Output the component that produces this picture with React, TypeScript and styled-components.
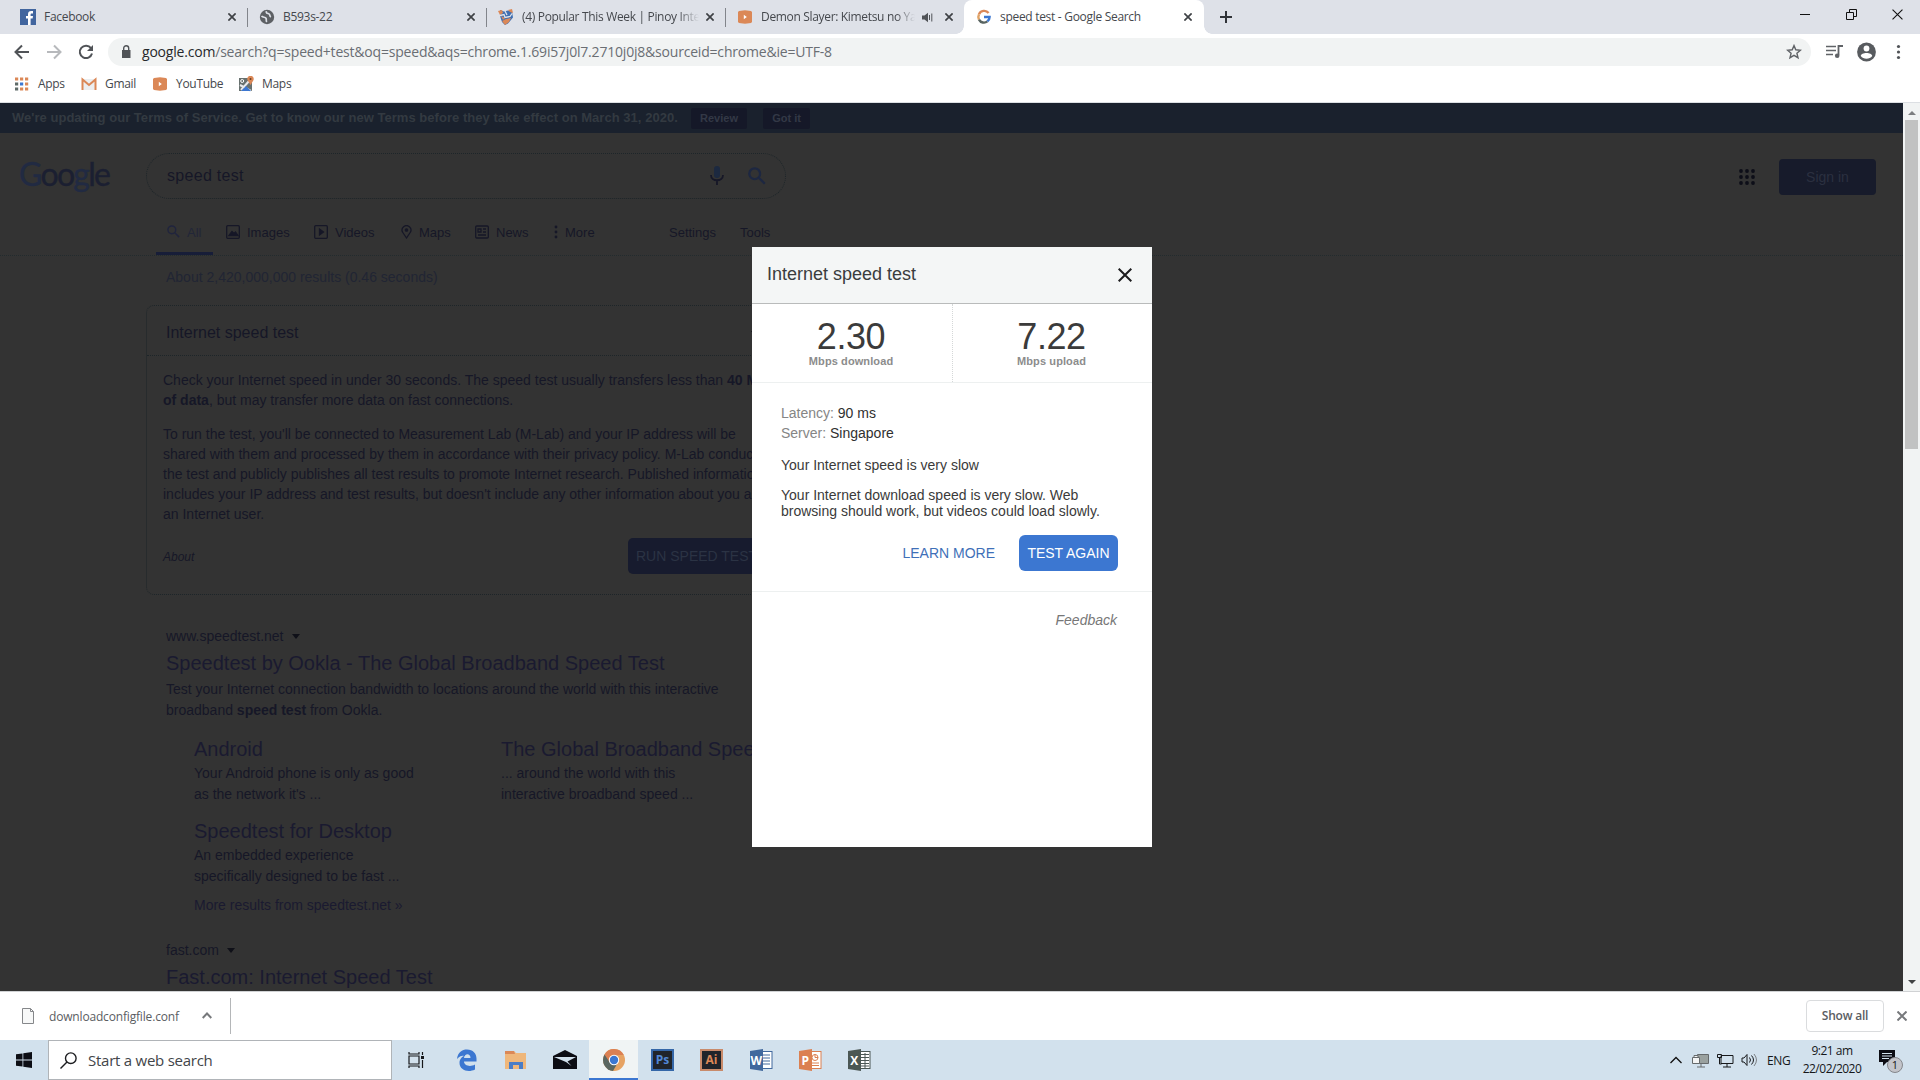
import React from 'react';
import styled, { createGlobalStyle, css } from 'styled-components';

const GlobalStyle = createGlobalStyle`
  * {
    box-sizing: border-box;
  }

  body {
    margin: 0;
    background: #ffffff;
    overflow: hidden;
  }

  svg {
    display: block;
    flex: none;
  }
`;

const uiFont = css`
  font-family: 'Open Sans', 'Noto Sans', sans-serif;
`;

const INK = '#161727';
const LINK = '#1a1a30';
const DIM_LINE = '#1d2529';

const Window = styled.div`
  width: 1920px;
  height: 1080px;
  display: flex;
  flex-direction: column;
  overflow: hidden;
  white-space: nowrap;
  ${uiFont}
`;

/* ---------- browser chrome ---------- */

const TabStrip = styled.div`
  display: flex;
  height: 34px;
  flex: none;
  padding-left: 8px;
  background: #dee1e8;
`;

const Tab = styled.div<{ $active?: boolean; $divider?: boolean }>`
  position: relative;
  display: flex;
  align-items: center;
  width: ${props => (props.$active ? 240 : 239)}px;
  height: 34px;
  padding: 0 ${props => (props.$active ? 12 : 11)}px 0 12px;
  border-radius: 8px 8px 0 0;
  background: ${props => (props.$active ? '#ffffff' : 'transparent')};
  font-size: 12px;
  color: #45484d;

  ${props => props.$divider && css`
    &::after {
      content: '';
      position: absolute;
      right: -1px;
      top: 8px;
      width: 1px;
      height: 19px;
      background: #82858b;
    }
  `}

  ${props => props.$active && css`
    &::before {
      content: '';
      position: absolute;
      left: -8px;
      right: -8px;
      bottom: 0;
      height: 8px;
      background:
        radial-gradient(circle at 0 0, transparent 7.5px, #fff 8px) left / 8px 8px no-repeat,
        radial-gradient(circle at 100% 0, transparent 7.5px, #fff 8px) right / 8px 8px no-repeat;
    }
  `}
`;

const TabTitle = styled.span<{ $fade?: boolean }>`
  flex: 1;
  min-width: 0;
  margin: 0 9px 0 8px;
  padding-bottom: 1px;
  overflow: hidden;
  letter-spacing: -0.3px;
  ${props => props.$fade && css`
    margin-right: 7px;
    letter-spacing: -0.33px;
    mask-image: linear-gradient(to right, #000 88%, transparent);
  `}
`;

const NewTab = styled.div`
  display: flex;
  align-items: center;
  margin-left: 16px;
`;

const WindowButtons = styled.div`
  display: flex;
  margin-left: auto;
  height: 28px;
`;

const WindowButton = styled.div`
  width: 46px;
  display: flex;
  align-items: center;
  justify-content: center;
`;

const Toolbar = styled.div`
  display: flex;
  align-items: center;
  height: 36px;
  flex: none;
  padding: 0 13px 0 14px;
  background: #ffffff;
`;

const NavButtons = styled.div`
  display: flex;
  gap: 16px;
  width: 94px;
`;

const AddressBar = styled.div`
  display: flex;
  align-items: center;
  width: 1703px;
  height: 28px;
  padding: 0 9px 0 12px;
  border-radius: 14px;
  background: #f1f3f3;
  font-size: 14px;
  color: #6a6e73;
`;

const Url = styled.span`
  flex: 1;
  margin-left: 10px;
  padding-bottom: 1px;
  letter-spacing: -0.2px;

  b {
    font-weight: 400;
    color: #26282b;
  }
`;

const ToolbarActions = styled.div`
  display: flex;
  align-items: center;
  justify-content: space-between;
  flex: 1;
  padding-left: 15px;
`;

const BookmarkBar = styled.div`
  display: flex;
  height: 33px;
  flex: none;
  padding: 0 0 4px 14px;
  border-bottom: 1px solid #dcdfe3;
  background: #ffffff;
`;

const Bookmark = styled.div<{ $width: number }>`
  display: flex;
  align-items: center;
  gap: 8px;
  width: ${props => props.$width}px;
  padding-bottom: 1px;
  font-size: 12px;
  letter-spacing: -0.3px;
  color: #45484d;
`;

/* ---------- page behind the dialog ---------- */

const Viewport = styled.div`
  position: relative;
  display: flex;
  height: 888px;
  flex: none;
  overflow: hidden;
`;

const Page = styled.div`
  width: 1903px;
  overflow: hidden;
  background: #333333;
  color: ${INK};
  font-family: 'Liberation Sans', Arial, sans-serif;
  font-size: 14px;
`;

const TermsBanner = styled.div`
  display: flex;
  align-items: center;
  height: 30px;
  padding-left: 12px;
  background: #1a212d;
  color: #333a41;
  font-weight: 700;
  font-size: 13px;
`;

const TermsText = styled.span`
  width: 679px;
  padding-bottom: 1px;
  letter-spacing: 0.03px;
`;

const TermsButton = styled.div<{ $width: number }>`
  width: ${props => props.$width}px;
  height: 21px;
  margin-right: 16px;
  border-radius: 2px;
  background: #151828;
  color: #333846;
  font-size: 11px;
  line-height: 21px;
  text-align: center;
`;

const SearchHeader = styled.div`
  display: flex;
  height: 85px;
  padding: 20px 27px 0 19px;
`;

const Logo = styled.div`
  width: 127px;
  font-family: Lato, sans-serif;
  font-size: 32px;
  line-height: 42px;
  letter-spacing: -1.7px;
  color: #212a42;
  -webkit-text-stroke: 0.4px currentColor;

  span {
    color: #1b1f31;
  }
`;

const SearchBox = styled.div`
  display: flex;
  align-items: center;
  width: 640px;
  height: 46px;
  padding: 0 19px 0 20px;
  border: 1px dotted ${DIM_LINE};
  border-radius: 23px;
  font-size: 16px;

  span {
    flex: 1;
    letter-spacing: 0.3px;
  }
`;

const HeaderActions = styled.div`
  display: flex;
  align-items: center;
  gap: 24px;
  height: 36px;
  margin: 6px 0 0 auto;
`;

const SignIn = styled.div`
  width: 97px;
  height: 36px;
  border-radius: 4px;
  background: #171b2b;
  color: #2b3040;
  font-size: 14px;
  line-height: 37px;
  text-align: center;
`;

const SearchTabs = styled.div`
  display: flex;
  height: 38px;
  padding-left: 156px;
  border-bottom: 1px dotted #222b2e;
`;

const SearchTab = styled.div<{ $width: number; $active?: boolean }>`
  display: flex;
  gap: 7px;
  width: ${props => props.$width}px;
  height: 37px;
  padding: 7px 0 0 ${props => (props.$active ? 11 : 0)}px;
  border-bottom: 3px solid ${props => (props.$active ? '#171d38' : 'transparent')};
  color: ${props => (props.$active ? '#222638' : INK)};
  font-size: 13px;
  line-height: 15px;
`;

const TabGap = styled.div<{ $width: number }>`
  width: ${props => props.$width}px;
`;

const ResultStats = styled.div`
  height: 49px;
  padding: 12px 0 0 166px;
  line-height: 18px;
  color: #212533;
`;

const Card = styled.div`
  width: 640px;
  height: 290px;
  margin-left: 146px;
  border: 1px dotted ${DIM_LINE};
  border-radius: 8px;
`;

const CardHeader = styled.div`
  display: flex;
  align-items: center;
  justify-content: space-between;
  height: 50px;
  padding: 5px 26px 0 19px;
  border-bottom: 1px dotted ${DIM_LINE};
  font-size: 16px;
`;

const CardBody = styled.div`
  padding: 14px 20px 0 16px;
  line-height: 20px;

  p {
    margin: 0 0 14px;
  }
`;

const CardFooter = styled.div`
  display: flex;
  justify-content: space-between;
  align-items: center;
  height: 36px;

  em {
    padding-top: 1px;
    font-size: 12px;
  }
`;

const RunButton = styled.div`
  width: 137px;
  height: 36px;
  border-radius: 5px;
  padding-left: 8px;
  background: #171b2e;
  color: #2b3344;
  line-height: 36px;
`;

const Results = styled.div`
  padding: 31px 0 0 166px;
`;

const Cite = styled.div`
  display: flex;
  align-items: center;
  gap: 8px;
  height: 20px;
`;

const Triangle = styled.i`
  border: 4px solid transparent;
  border-top: 5px solid #0f1018;
  border-bottom: 0;
`;

const ResultTitle = styled.div`
  height: 33px;
  font-size: 20px;
  line-height: 34px;
  color: ${LINK};
`;

const Snippet = styled.div`
  line-height: 20.6px;
`;

const SiteLinks = styled.div`
  display: grid;
  grid-template-columns: 307px 300px;
  grid-template-rows: 82px 77px;
  padding: 16px 0 0 28px;
`;

const SiteLinkTitle = styled.div`
  font-size: 20px;
  line-height: 27px;
  color: ${LINK};
`;

const MoreResults = styled.div`
  height: 45px;
  padding-left: 28px;
  line-height: 20px;
  color: ${LINK};
`;

const Scrollbar = styled.div`
  display: flex;
  flex-direction: column;
  align-items: center;
  justify-content: space-between;
  width: 17px;
  padding: 7px 0 6px;
  background: #f1f3f3;
`;

const Thumb = styled.div`
  width: 13px;
  height: 329px;
  margin: 5px 0 auto;
  background: #c1c2c2;
`;

/* ---------- speed test dialog ---------- */

const Dialog = styled.div`
  position: absolute;
  left: 752px;
  top: 144px;
  width: 400px;
  height: 600px;
  background: #ffffff;
  color: #3a3a3a;
  font-family: 'Liberation Sans', Arial, sans-serif;
  font-size: 14px;
`;

const DialogHeader = styled.div`
  display: flex;
  align-items: center;
  justify-content: space-between;
  height: 57px;
  padding: 0 20px 1px 15px;
  border-bottom: 1px solid #b9bbbb;
  background: #f4f6f6;
  font-size: 18px;
  color: #3a3c3e;
`;

const Metrics = styled.div`
  display: grid;
  grid-template-columns: 200px 200px;
  height: 79px;
  border-bottom: 1px solid #edf0f0;
`;

const Metric = styled.div`
  padding: 12px 2px 0 0;
  text-align: center;

  & + & {
    border-left: 1px dotted #d5d8d8;
  }
`;

const MetricValue = styled.div`
  font-size: 36px;
  line-height: 42px;
  letter-spacing: -0.4px;
  color: #3b3b3b;
`;

const MetricUnit = styled.div`
  margin-top: -4px;
  font-size: 11px;
  font-weight: 700;
  line-height: 14px;
  letter-spacing: 0.1px;
  color: #8c8c8c;
`;

const DialogBody = styled.div`
  height: 209px;
  padding: 20px 34px 0 29px;
  border-bottom: 1px solid #edf0f0;
  line-height: 20px;

  p {
    margin: 12px 0 0;
  }
`;

const Detail = styled.div`
  color: #303030;

  span {
    color: #858585;
  }
`;

const Advice = styled.p`
  line-height: 16px;
`;

const DialogActions = styled.div`
  display: flex;
  justify-content: flex-end;
  align-items: center;
  gap: 24px;
  margin-top: 16px;
  color: #3f70b8;
`;

const TestAgain = styled.div`
  width: 99px;
  height: 36px;
  border-radius: 6px;
  background: #3c77d1;
  color: #ffffff;
  line-height: 36px;
  text-align: center;
`;

const Feedback = styled.div`
  padding: 18px 35px 0 0;
  font-style: italic;
  line-height: 20px;
  text-align: right;
  color: #777777;
`;

/* ---------- download shelf ---------- */

const Shelf = styled.div`
  display: flex;
  align-items: center;
  height: 49px;
  flex: none;
  padding: 0 13px 1px 22px;
  border-top: 1px solid #d0d2d4;
  background: #ffffff;
  font-size: 12px;
  color: #5a5d62;
`;

const Download = styled.div`
  display: flex;
  align-items: center;
  width: 209px;
  height: 36px;
  border-right: 1px solid #b4b6b8;
  letter-spacing: -0.17px;

  span {
    width: 153px;
    padding: 2px 0 0 15px;
  }
`;

const ShowAll = styled.div`
  width: 78px;
  height: 32px;
  margin: 0 13px 0 auto;
  border: 1px solid #dadcde;
  border-radius: 4px;
  font-weight: 600;
  letter-spacing: -0.2px;
  line-height: 30px;
  text-align: center;
`;

/* ---------- taskbar ---------- */

const Taskbar = styled.div`
  display: flex;
  align-items: center;
  height: 40px;
  flex: none;
  background: #d2e1ed;
  color: #15171a;
`;

const StartButton = styled.div`
  display: flex;
  justify-content: center;
  width: 48px;
`;

const TaskSearch = styled.div`
  display: flex;
  align-items: center;
  gap: 11px;
  width: 344px;
  height: 40px;
  padding-left: 11px;
  border: 1px solid #b0b4b8;
  background: #ffffff;
  font-size: 15px;
  letter-spacing: -0.25px;
  color: #424549;
`;

const TaskItem = styled.div<{ $active?: boolean }>`
  display: flex;
  align-items: center;
  justify-content: center;
  width: 49px;
  height: 40px;
  background: ${props => (props.$active ? '#f0f4f4' : 'transparent')};
  border-bottom: 2px solid ${props => (props.$active ? '#3c77d1' : 'transparent')};
  border-top: 2px solid transparent;

  &:nth-child(3) {
    width: 50px;
    padding-right: 2px;
  }
`;

const AdobeIcon = styled.div<{ $color: string; $ink: string }>`
  width: 23px;
  height: 22px;
  border: 2px solid ${props => props.$color};
  background: #20242a;
  color: ${props => props.$ink};
  font-size: 12px;
  font-weight: 700;
  line-height: 17px;
  text-align: center;
`;

const Tray = styled.div`
  display: flex;
  align-items: center;
  margin-left: auto;
  padding-right: 17px;
`;

const Language = styled.span`
  width: 35px;
  margin-left: 9px;
  font-size: 12px;
  letter-spacing: -0.3px;
`;

const Clock = styled.div`
  width: 60px;
  font-size: 12px;
  letter-spacing: -0.5px;
  line-height: 18px;
  text-align: center;
`;

const TrayIcon = styled.div<{ $left: number }>`
  margin-left: ${props => props.$left}px;
`;

const NoticeIcon = styled.div`
  position: relative;
  width: 24px;
  height: 26px;
  margin: 6px 0 0 17px;
`;

const NoticeCount = styled.span`
  position: absolute;
  left: 8px;
  top: 7px;
  width: 16px;
  height: 16px;
  border: 1px solid #85878c;
  border-radius: 50%;
  background: #c3c4ca;
  font-size: 11px;
  line-height: 14px;
  text-align: center;
`;

const Cross: React.FC<{ size?: number; color?: string; weight?: number }> = ({
  size = 8,
  color = '#3e4145',
  weight = 1.7,
}) => (
  <svg width={size} height={size} viewBox="0 0 10 10" stroke={color} strokeWidth={(weight * 10) / size}>
    <path d="M.5.5l9 9M9.5.5l-9 9" />
  </svg>
);

const VideoIcon = () => (
  <svg width="16" height="16" viewBox="0 0 16 16">
    <path d="M2 2l6-.7L14 2l1 1v10l-1 1-6 .7L2 14l-1-1V3z" fill="#db8857" />
    <path d="M6.8 5.8v4.4L9.8 8z" fill="#fff" />
  </svg>
);

const Magnifier: React.FC<{ size: number; color: string; weight?: number }> = ({ size, color, weight = 2 }) => (
  <svg width={size} height={size} viewBox="0 0 18 18" fill="none" stroke={color} strokeWidth={weight}>
    <circle cx="6.7" cy="6.7" r="5.4" />
    <path d="M10.8 10.8l6 6" />
  </svg>
);

const OfficeIcon: React.FC<{ color: string; letter: string; kind: 'doc' | 'slide' | 'sheet' }> = ({
  color,
  letter,
  kind,
}) => (
  <svg width="24" height="24" viewBox="0 0 24 24">
    <rect x="12" y="3.5" width="11" height="17" fill="#fff" stroke={color} />
    {kind === 'doc' && <path d="M14 7h7M14 10h7M14 13h7M14 16h7" stroke={color} />}
    {kind === 'slide' && (
      <g stroke={color} fill="none">
        <circle cx="17" cy="9.5" r="3" />
        <path d="M17 9.5V6M17 9.5h3M14 15h7M14 17.5h7" />
      </g>
    )}
    {kind === 'sheet' && <path d="M14 6.5h8M14 9.5h8M14 12.5h8M14 15.5h8M14 18h8M18 5v15" stroke={color} />}
    <path d="M1 3l13-2v22L1 21z" fill={color} />
    <text x="7.3" y="16.5" fill="#fff" fontFamily="Open Sans" fontWeight="700" fontSize="12" textAnchor="middle">
      {letter}
    </text>
  </svg>
);

const dotGrid = [1, 6, 11];

const BrowserTabs = () => (
  <TabStrip>
    <Tab $divider>
      <svg width="16" height="16" viewBox="0 0 16 16">
        <path d="M0 0h16v16H0z" fill="#41659e" />
        <path d="M8 16V9.5H6V7h2V5.2C8 3 9.3 2 11.2 2H13v2.4h-1.2c-.9 0-1.2.4-1.2 1.2V7H13l-.4 2.5h-2V16z" fill="#fff" />
      </svg>
      <TabTitle>Facebook</TabTitle>
      <Cross />
    </Tab>
    <Tab $divider>
      <svg width="16" height="16" viewBox="0 0 16 16">
        <circle cx="8" cy="8" r="7.2" fill="#5d6064" />
        <path
          d="M2.5 7c1.5 1.8 3.5.8 4.5 2.2.8 1.1-.4 2.3.8 3.8M7.5 2.2c-.8 1.8.8 2 2.2 2.5 1.8.7.3 2.3 2.2 3.3"
          fill="none"
          stroke="#dee1e8"
          strokeWidth="1.7"
        />
      </svg>
      <TabTitle>B593s-22</TabTitle>
      <Cross />
    </Tab>
    <Tab $divider>
      <svg width="16" height="16" viewBox="0 0 16 16">
        <path d="M2 1l4 1.500 4-1 4 1 1 6-5 6-3 1.500-3-3-2-6z" fill="#3f6fb2" />
        <path d="M0 2l4-1 1 3-3 2zM10 1l4-1 1 4-3-1zM3 7l4 2-2 2zM4 12l4-2 5-1-2 4-4 3z" fill="#db8857" />
        <path d="M2 6.500l4-1 1 3 5-1 2-3M7 2l2 4" fill="none" stroke="#dfe3ea" strokeWidth="1.3" />
      </svg>
      <TabTitle $fade>(4) Popular This Week | Pinoy Internet</TabTitle>
      <Cross />
    </Tab>
    <Tab>
      <VideoIcon />
      <TabTitle $fade>Demon Slayer: Kimetsu no Yaiba</TabTitle>
      <svg width="11" height="11" viewBox="0 0 11 11">
        <path d="M0 3.5h2.5L6 .8v9.4L2.5 7.5H0z" fill="#505357" />
        <path d="M7.5 3v5M9.8 1.5v8" stroke="#505357" />
      </svg>
      <TabGap $width={12} />
      <Cross />
    </Tab>
    <Tab $active>
      <svg width="16" height="16" viewBox="0 0 16 16" fill="none" strokeWidth="2.4">
        <path d="M12.6 4A5.6 5.6 0 0 0 3 5.4" stroke="#db8857" />
        <path d="M3 5.4a5.6 5.6 0 0 0 0 5.2" stroke="#e0a468" />
        <path d="M3 10.6A5.6 5.6 0 0 0 11.4 12.4" stroke="#586461" />
        <path d="M11.4 12.4C13 11 13.6 9.8 13.6 8H8" stroke="#3c77d1" />
      </svg>
      <TabTitle>speed test - Google Search</TabTitle>
      <Cross />
    </Tab>
    <NewTab>
      <svg width="12" height="12" viewBox="0 0 12 12" stroke="#303338" strokeWidth="2">
        <path d="M6 0v12M0 6h12" />
      </svg>
    </NewTab>
    <WindowButtons>
      <WindowButton>
        <svg width="10" height="10" stroke="#111">
          <path d="M0 5.5h10" />
        </svg>
      </WindowButton>
      <WindowButton>
        <svg width="11" height="11" fill="none" stroke="#111">
          <path d="M.5 3.5h7v7h-7zM3.5 3V.5h7v7H8" />
        </svg>
      </WindowButton>
      <WindowButton>
        <Cross size={11} color="#111" weight={1.1} />
      </WindowButton>
    </WindowButtons>
  </TabStrip>
);

const NavigationBar = () => (
  <Toolbar>
    <NavButtons>
      <svg width="16" height="16" viewBox="0 0 16 16" fill="none" stroke="#505357" strokeWidth="2">
        <path d="M15 8H2M8 1.5L1.5 8 8 14.5" />
      </svg>
      <svg width="16" height="16" viewBox="0 0 16 16" fill="none" stroke="#b7b9bc" strokeWidth="2">
        <path d="M1 8h13M8 1.5L14.5 8 8 14.5" />
      </svg>
      <svg width="16" height="16" viewBox="0 0 16 16">
        <path d="M13 4.2A6.2 6.2 0 1 0 14 9.5" fill="none" stroke="#505357" strokeWidth="2" />
        <path d="M15 1v6H9z" fill="#505357" />
      </svg>
    </NavButtons>
    <AddressBar>
      <svg width="12" height="14" viewBox="0 0 12 14">
        <path d="M2 5h8.5v8H2z" fill="#505357" />
        <path d="M3.7 5.5V3.2a2.5 2.5 0 0 1 5 0v2.3" fill="none" stroke="#505357" strokeWidth="1.4" />
      </svg>
      <Url>
        <b>google.com</b>/search?q=speed+test&amp;oq=speed&amp;aqs=chrome.1.69i57j0l7.2710j0j8&amp;sourceid=chrome&amp;ie=UTF-8
      </Url>
      <svg width="16" height="16" viewBox="0 0 16 16" fill="none" stroke="#606367" strokeWidth="1.4">
        <path d="M8 1.6l1.8 4.2 4.6.4-3.5 3 1.1 4.5L8 11.3l-4 2.4 1.1-4.5-3.5-3 4.6-.4z" />
      </svg>
    </AddressBar>
    <ToolbarActions>
      <svg width="17" height="14" viewBox="0 0 17 14">
        <path d="M0 1.5h10M0 5.5h10M0 9.5h7" stroke="#606367" strokeWidth="1.6" />
        <path d="M17 1h-4.5v9" fill="none" stroke="#606367" strokeWidth="1.8" />
        <circle cx="11.2" cy="10.8" r="2.3" fill="#606367" />
      </svg>
      <svg width="20" height="20" viewBox="0 0 20 20">
        <circle cx="9.500" cy="10" r="9.400" fill="#585b5f" />
        <circle cx="9.500" cy="6.500" r="2.900" fill="#fff" />
        <path d="M3.800 14c0-4 11.400-4 11.400 0-2.400 3.600-9 3.600-11.400 0z" fill="#fff" />
      </svg>
      <svg width="16" height="16" viewBox="0 0 16 16" fill="#505357">
        <circle cx="7.500" cy="2.500" r="1.600" />
        <circle cx="7.500" cy="8" r="1.600" />
        <circle cx="7.500" cy="13.500" r="1.600" />
      </svg>
    </ToolbarActions>
  </Toolbar>
);

const Bookmarks = () => (
  <BookmarkBar>
    <Bookmark $width={67}>
      <svg width="16" height="14" viewBox="0 0 16 14">
        {dotGrid.map((y, row) =>
          dotGrid.map((x, col) => (
            <rect
              key={`${x}-${y}`}
              x={x}
              y={y - 0.5}
              width="3.2"
              height="3"
              fill={row === 1 && col === 1 ? '#3c77d1' : col === 0 && row > 0 ? '#5f6b68' : '#db8857'}
            />
          ))
        )}
      </svg>
      Apps
    </Bookmark>
    <Bookmark $width={71}>
      <svg width="16" height="16" viewBox="0 0 16 16">
        <path d="M1 3h14v11H1z" fill="#eceef0" />
        <path d="M1.5 14V3.5L8 9l6.5-5.5V14" fill="none" stroke="#db8857" strokeWidth="2" />
      </svg>
      Gmail
    </Bookmark>
    <Bookmark $width={86}>
      <VideoIcon />
      YouTube
    </Bookmark>
    <Bookmark $width={80}>
      <svg width="16" height="16" viewBox="0 0 16 16">
        <path d="M1 2h13v13H1z" fill="#68716f" />
        <path d="M3 14L12 4M2 9l11 6" stroke="#e8eaec" strokeWidth="2" />
        <path d="M3 15l5-5 5 5z" fill="#3c77d1" />
        <path d="M12.5 9L9.7 4.5a3.2 3.2 0 1 1 5.6 0z" fill="#db8857" />
        <circle cx="12.5" cy="3" r="1" fill="#6b3c22" />
        <circle cx="4.2" cy="5" r="1.5" fill="none" stroke="#fff" />
      </svg>
      Maps
    </Bookmark>
  </BookmarkBar>
);

const SearchNavigation = () => (
  <SearchTabs>
    <SearchTab $width={57} $active>
      <Magnifier size={13} color="#20243d" />
      All
    </SearchTab>
    <TabGap $width={13} />
    <SearchTab $width={88}>
      <svg width="14" height="14" fill="none" stroke={INK} strokeWidth="1.3">
        <rect x=".7" y=".7" width="12.6" height="12.6" rx="1" />
        <path d="M3 10.5l3-4 2 2 1.5-1.5L12 10.5z" fill={INK} />
      </svg>
      Images
    </SearchTab>
    <SearchTab $width={87}>
      <svg width="14" height="14" fill="none" stroke={INK} strokeWidth="1.3">
        <rect x=".7" y=".7" width="12.6" height="12.6" rx="1" />
        <path d="M5.5 4v6L9.5 7z" fill={INK} />
      </svg>
      Videos
    </SearchTab>
    <SearchTab $width={74}>
      <svg width="11" height="14" fill="none" stroke={INK} strokeWidth="1.3">
        <path d="M5.5 13L1.8 7.5a4.4 4.4 0 1 1 7.4 0z" />
        <circle cx="5.5" cy="5" r="1.2" fill={INK} />
      </svg>
      Maps
    </SearchTab>
    <SearchTab $width={79}>
      <svg width="14" height="14" fill="none" stroke={INK} strokeWidth="1.3">
        <rect x=".7" y="1" width="12.6" height="12" rx="1" />
        <path d="M3 4h3v3H3zM8 4h3M8 7h3M3 10h8" />
      </svg>
      News
    </SearchTab>
    <SearchTab $width={115}>
      <svg width="4" height="14" fill={INK}>
        <circle cx="2" cy="2" r="1.4" />
        <circle cx="2" cy="7" r="1.4" />
        <circle cx="2" cy="12" r="1.4" />
      </svg>
      More
    </SearchTab>
    <SearchTab $width={71}>Settings</SearchTab>
    <SearchTab $width={40}>Tools</SearchTab>
  </SearchTabs>
);

const SearchPage = () => (
  <Page>
    <TermsBanner>
      <TermsText>
        We're updating our Terms of Service. Get to know our new Terms before they take effect on March 31, 2020.
      </TermsText>
      <TermsButton $width={56}>Review</TermsButton>
      <TermsButton $width={47}>Got it</TermsButton>
    </TermsBanner>
    <SearchHeader>
      <Logo>
        G<span>oo</span>g<span>le</span>
      </Logo>
      <SearchBox>
        <span>speed test</span>
        <svg width="14" height="20" viewBox="0 0 14 20">
          <rect x="4" y="0" width="6" height="12" rx="3" fill="#1c2940" />
          <path d="M1 9c0 7 12 7 12 0M7 14.5V19" fill="none" stroke={INK} strokeWidth="1.8" />
        </svg>
        <TabGap $width={24} />
        <Magnifier size={18} color="#1d2741" weight={2.3} />
      </SearchBox>
      <HeaderActions>
        <svg width="16" height="16" fill="#0d0e18">
          {[2, 8, 14].map(y => [2, 8, 14].map(x => <circle key={`${x}-${y}`} cx={x} cy={y} r="1.9" />))}
        </svg>
        <SignIn>Sign in</SignIn>
      </HeaderActions>
    </SearchHeader>
    <SearchNavigation />
    <ResultStats>About 2,420,000,000 results (0.46 seconds)</ResultStats>
    <Card>
      <CardHeader>
        Internet speed test
        <Triangle />
      </CardHeader>
      <CardBody>
        <p>
          Check your Internet speed in under 30 seconds. The speed test usually transfers less than <b>40 MB</b>
          <br />
          <b>of data</b>, but may transfer more data on fast connections.
        </p>
        <p>
          To run the test, you'll be connected to Measurement Lab (M-Lab) and your IP address will be
          <br />
          shared with them and processed by them in accordance with their privacy policy. M-Lab conducts
          <br />
          the test and publicly publishes all test results to promote Internet research. Published information
          <br />
          includes your IP address and test results, but doesn't include any other information about you as
          <br />
          an Internet user.
        </p>
        <CardFooter>
          <em>About</em>
          <RunButton>RUN SPEED TEST</RunButton>
        </CardFooter>
      </CardBody>
    </Card>
    <Results>
      <Cite>
        www.speedtest.net <Triangle />
      </Cite>
      <ResultTitle>Speedtest by Ookla - The Global Broadband Speed Test</ResultTitle>
      <Snippet>
        Test your Internet connection bandwidth to locations around the world with this interactive
        <br />
        broadband <b>speed test</b> from Ookla.
      </Snippet>
      <SiteLinks>
        <div>
          <SiteLinkTitle>Android</SiteLinkTitle>
          <Snippet>
            Your Android phone is only as good
            <br />
            as the network it's ...
          </Snippet>
        </div>
        <div>
          <SiteLinkTitle>The Global Broadband Speed Test</SiteLinkTitle>
          <Snippet>
            ... around the world with this
            <br />
            interactive broadband speed ...
          </Snippet>
        </div>
        <div>
          <SiteLinkTitle>Speedtest for Desktop</SiteLinkTitle>
          <Snippet>
            An embedded experience
            <br />
            specifically designed to be fast ...
          </Snippet>
        </div>
      </SiteLinks>
      <MoreResults>More results from speedtest.net »</MoreResults>
      <Cite>
        fast.com <Triangle />
      </Cite>
      <ResultTitle>Fast.com: Internet Speed Test</ResultTitle>
    </Results>
  </Page>
);

const SpeedTestDialog = () => (
  <Dialog>
    <DialogHeader>
      Internet speed test
      <Cross size={14} color="#1c1c1e" weight={2} />
    </DialogHeader>
    <Metrics>
      <Metric>
        <MetricValue>2.30</MetricValue>
        <MetricUnit>Mbps download</MetricUnit>
      </Metric>
      <Metric>
        <MetricValue>7.22</MetricValue>
        <MetricUnit>Mbps upload</MetricUnit>
      </Metric>
    </Metrics>
    <DialogBody>
      <Detail>
        <span>Latency:</span> 90 ms
      </Detail>
      <Detail>
        <span>Server:</span> Singapore
      </Detail>
      <p>Your Internet speed is very slow</p>
      <Advice>
        Your Internet download speed is very slow. Web
        <br />
        browsing should work, but videos could load slowly.
      </Advice>
      <DialogActions>
        LEARN MORE
        <TestAgain>TEST AGAIN</TestAgain>
      </DialogActions>
    </DialogBody>
    <Feedback>Feedback</Feedback>
  </Dialog>
);

const DownloadShelf = () => (
  <Shelf>
    <Download>
      <svg width="12" height="16" fill="#f7f8f8" stroke="#85878a">
        <path d="M.5.5h8l3 3v12H.5zM8.5.5v3h3" />
      </svg>
      <span>downloadconfigfile.conf</span>
      <TrayIcon $left={15}>
        <svg width="10" height="7" fill="none" stroke="#77797c" strokeWidth="2">
          <path d="M.7 6L5 1.5 9.3 6" />
        </svg>
      </TrayIcon>
    </Download>
    <ShowAll>Show all</ShowAll>
    <Cross size={10} color="#77797c" weight={2} />
  </Shelf>
);

const WindowsTaskbar = () => (
  <Taskbar>
    <StartButton>
      <svg width="16" height="16" viewBox="0 0 16 16" fill="#0c0d14">
        <path d="M0 2.3L6.5 1.4v6.2H0zM7.3 1.3L16 0v7.6H7.3zM0 8.4h6.5v6.2L0 13.7zM7.3 8.4H16V16l-8.7-1.3z" />
      </svg>
    </StartButton>
    <TaskSearch>
      <svg width="17" height="17" viewBox="0 0 17 17" fill="none" stroke="#1c1d20" strokeWidth="1.4">
        <circle cx="10.8" cy="6.2" r="5.3" />
        <path d="M7 10L.5 16.5" />
      </svg>
      Start a web search
    </TaskSearch>
    <TaskItem>
      <svg width="17" height="16" fill="none" stroke="#17181b" strokeWidth="1.2">
        <path d="M1 4h10v8H1zM1 0v2h10V0M1 16v-2h10v2M14.5 0v3M14.5 8v8" />
        <path d="M13 4h3v3h-3z" fill="#17181b" stroke="none" />
      </svg>
    </TaskItem>
    <TaskItem>
      <svg width="21" height="23" viewBox="0 0 21 23">
        <path
          d="M1 10C2 3 6 .5 11 .5c6 0 9.5 4 9.5 9v3H8c0 4 6 6 11 3v5C12 24 3.5 21 3.5 14 3.5 10 6 7.5 9 6.5 5.5 6.5 3 7.5 1 10zm7-1h6.5c0-5-6-5-6.500 0z"
          fill="#3c77d1"
        />
      </svg>
    </TaskItem>
    <TaskItem>
      <svg width="23" height="20" viewBox="0 0 23 20">
        <path d="M1 1h9l2 2h10v16H1z" fill="#efb77b" />
        <path d="M1 1h9l1 3H1z" fill="#db8857" />
        <path d="M5 19v-7h14v7h-4v-4H9v4z" fill="#4a7dc7" />
      </svg>
    </TaskItem>
    <TaskItem>
      <svg width="24" height="20" viewBox="0 0 24 20">
        <path d="M0 6l12-6 12 6v13H0z" fill="#0c0d14" />
        <path d="M1 7h22l-8.500 4.500 4 4.500-5.500-4z" fill="#d2e1ed" />
      </svg>
    </TaskItem>
    <TaskItem $active>
      <svg width="24" height="24" viewBox="0 0 24 24">
        <circle cx="12" cy="12" r="11" fill="#e6a363" />
        <path d="M12 12L2.5 6.5A11 11 0 0 0 11 23l4-7z" fill="#5a6660" />
        <path d="M12 7h9.8A11 11 0 0 0 2.5 6.5L7.5 14z" fill="#db8052" />
        <circle cx="12" cy="12" r="5.2" fill="#fff" />
        <circle cx="12" cy="12" r="4.2" fill="#3c77d1" />
      </svg>
    </TaskItem>
    <TaskItem>
      <AdobeIcon $color="#3567a8" $ink="#5187d6">
        Ps
      </AdobeIcon>
    </TaskItem>
    <TaskItem>
      <AdobeIcon $color="#c98b6b" $ink="#db8857">
        Ai
      </AdobeIcon>
    </TaskItem>
    <TaskItem>
      <OfficeIcon color="#41689d" letter="W" kind="doc" />
    </TaskItem>
    <TaskItem>
      <OfficeIcon color="#db8052" letter="P" kind="slide" />
    </TaskItem>
    <TaskItem>
      <OfficeIcon color="#4b5754" letter="X" kind="sheet" />
    </TaskItem>
    <Tray>
      <svg width="12" height="8" fill="none" stroke="#111" strokeWidth="1.3">
        <path d="M.5 7L6 1.5 11.5 7" />
      </svg>
      <TrayIcon $left={10}>
        <svg width="17" height="15" fill="none" stroke="#666a6c">
          <path d="M5.5 1.5h11v9h-11z" fill="#9aa19f" />
          <path d="M.5 4.5h7v6h-7zM2 4V2.5h4V4" fill="#f3f4f4" />
          <path d="M9 11v3M5 14h8" />
        </svg>
      </TrayIcon>
      <TrayIcon $left={8}>
        <svg width="17" height="15" fill="none" stroke="#17181b">
          <path d="M4 2.5h12v8H4zM10 11v3M6 14h8M.5 1.5h4v3h-4zM2.5 5v6h2" />
        </svg>
      </TrayIcon>
      <TrayIcon $left={7}>
        <svg width="17" height="14" fill="none" stroke="#17181b">
          <path d="M1 5h2l3-3.5v11L3 9H1zM8.5 4.5q2 2.5 0 5M10.5 2.5q4 4.5 0 9" />
          <path d="M13 1q5 6 0 12" stroke="#7d8185" />
        </svg>
      </TrayIcon>
      <Language>ENG</Language>
      <Clock>
        9:21 am
        <br />
        22/02/2020
      </Clock>
      <NoticeIcon>
        <svg width="17" height="16">
          <path d="M0 0h16v12H8l-4 4v-4H0z" fill="#0c0d14" />
          <path d="M3 3.5h10M3 6h10M3 8.5h7" stroke="#d2e1ed" />
        </svg>
        <NoticeCount>1</NoticeCount>
      </NoticeIcon>
    </Tray>
  </Taskbar>
);

const App: React.FC = () => (
  <>
    <GlobalStyle />
    <Window>
      <BrowserTabs />
      <NavigationBar />
      <Bookmarks />
      <Viewport>
        <SearchPage />
        <Scrollbar>
          <svg width="8" height="5" fill="#7c7e80">
            <path d="M0 5l4-4 4 4z" />
          </svg>
          <Thumb />
          <svg width="8" height="5" fill="#404244">
            <path d="M0 0h8L4 4z" />
          </svg>
        </Scrollbar>
        <SpeedTestDialog />
      </Viewport>
      <DownloadShelf />
      <WindowsTaskbar />
    </Window>
  </>
);

export default App;
